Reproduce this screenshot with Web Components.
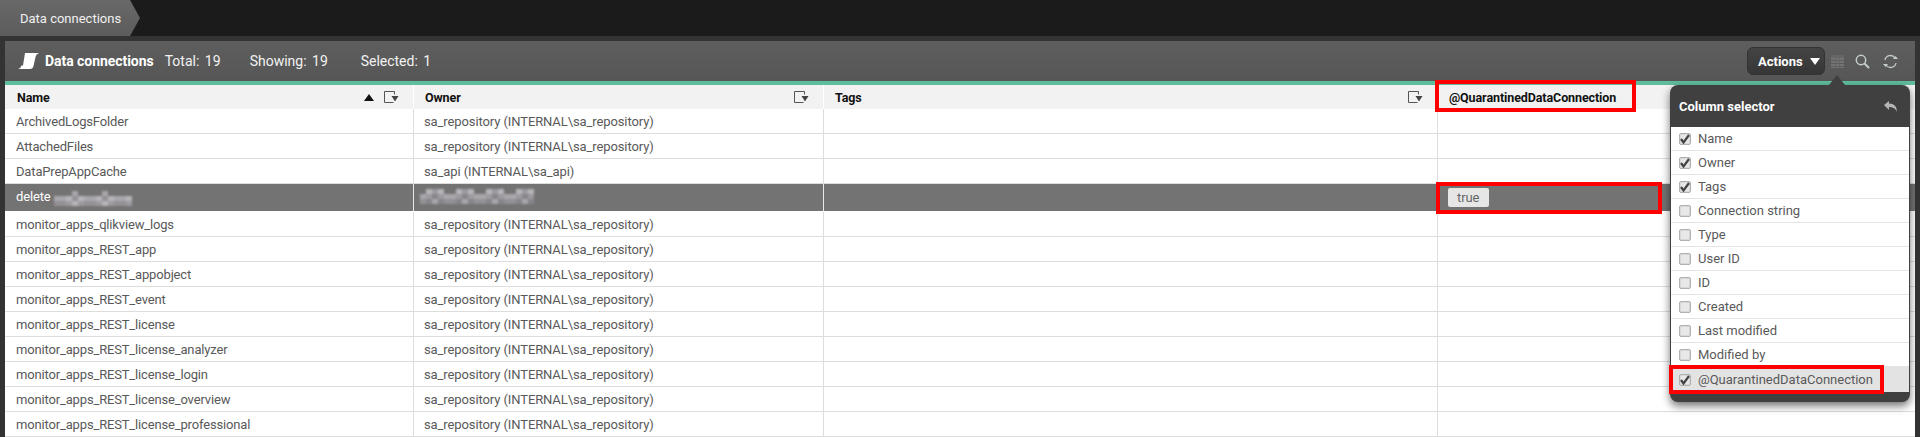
<!DOCTYPE html>
<html>
<head>
<meta charset="utf-8">
<title>Data connections</title>
<style>
  html, body { margin: 0; height: 437px; overflow: hidden; background: #333; }
  body { position: relative; font-family: Roboto, "Liberation Sans", sans-serif; }
</style>
</head>
<body>
<nav-bar>Data connections</nav-bar>
<conn-panel></conn-panel>
<column-selector></column-selector>
<red-box style="left:1435px;top:80px;width:201px;height:32px"></red-box>
<red-box style="left:1436px;top:182px;width:226px;height:32px"></red-box>
<red-box style="left:1669px;top:365px;width:215px;height:29px"></red-box>

<script>
const FILTER_ICON = `<svg width="15" height="12" viewBox="0 0 15 12"><path d="M10.500 3.500V.5H.5v11h9" fill="none" stroke="#555"/><path d="M7.500 5h7L11 10.500z" fill="#444"/></svg>`;

class NavBar extends HTMLElement {
  constructor() {
    super();
    this.attachShadow({ mode: "open" }).innerHTML = `
      <style>
        :host { display: block; height: 36px; background: #1b1b1b; }
        .crumb { display: flex; align-items: center; width: 140px; height: 36px; padding-left: 20px; box-sizing: border-box;
                 font-size: 13px; color: #f0f0f0; background: linear-gradient(#686868, #5c5c5c);
                 clip-path: polygon(0 0, 130px 0, 140px 18px, 130px 36px, 0 36px); }
      </style>
      <div class="crumb"><slot></slot></div>`;
  }
}
customElements.define("nav-bar", NavBar);

class PanelHeader extends HTMLElement {
  constructor() {
    super();
    this.attachShadow({ mode: "open" }).innerHTML = `
      <style>
        :host { display: flex; align-items: center; height: 44px; box-sizing: border-box; padding: 0 16px 0 13px;
                background: linear-gradient(#5e5e5e, #565656); border-bottom: 4px solid #5fbc9c; color: #f2f2f2; font-size: 14px; }
        .logo { display: block; margin-right: 6px; }
        b { color: #fff; font-weight: 700; margin-right: 11px; letter-spacing: -.05px; }
        .stat { word-spacing: 2px; }
        .btn { margin-left: auto; display: flex; align-items: center; width: 78px; height: 28px; box-sizing: border-box; padding-left: 10px;
               background: linear-gradient(#444, #363636); border: 1px solid #333; border-radius: 6px; color: #fff; font-weight: 700; font-size: 13px; }
        .btn i { margin-left: 7px; border: 5px solid transparent; border-top: 7px solid #fff; border-bottom: 0; }
        .tools { display: flex; align-items: center; }
        .tools svg { display: block; }
      </style>
      <svg class="logo" width="21" height="16" viewBox="0 0 21 16"><path d="M7 0h14q-3 1-3.500 4l-2 9q-.6 3-3.500 3H0q3-1 3.500-3.500h1.500z" fill="#fff"/></svg>
      <b>Data connections</b>
      <span class="stat" style="width:85px">Total: 19</span>
      <span class="stat" style="width:111px">Showing: 19</span>
      <span class="stat">Selected: 1</span>
      <div class="btn">Actions<i></i></div>
      <div class="tools">
        <svg style="margin-left:6px" width="13" height="13" viewBox="0 0 13 13"><path d="M0 0h13v13H0z" fill="#737373"/><path d="M0 0h13v3H0z" fill="#666"/><path d="M0 5.500h13M0 8.500h13M0 11.500h13" stroke="#5c5c5c"/><path d="M4.500 3v10M8.500 3v10" stroke="#666"/></svg>
        <svg style="margin-left:11px" width="15" height="15" viewBox="0 0 15 15"><circle cx="6" cy="6" r="4.700" fill="none" stroke="#c5cccc" stroke-width="1.500"/><path d="M9.500 9.500l4.500 4.500" stroke="#c5cccc" stroke-width="2"/></svg>
        <svg style="margin-left:12px" width="17" height="15" viewBox="0 0 17 15"><path d="M3 6a5.500 5.500 0 0 1 10-2M14 9a5.500 5.500 0 0 1-10 2" fill="none" stroke="#c5cccc" stroke-width="1.300"/><path d="M11 5h5l-2.500-3zM1 10h5l-2.500 3z" fill="#c5cccc"/></svg>
      </div>`;
  }
}
customElements.define("panel-header", PanelHeader);

// pixelated stand-in for the blurred-out text
class BlurBlock extends HTMLElement {
  connectedCallback() {
    const w = +this.getAttribute("w"), seed = +this.getAttribute("seed");
    let cells = "";
    for (let y = 0; y < 3; y++) for (let x = 0; x < w; x++) {
      const v = (x * 7 + y * 13 + seed * x * x) % 5;
      const g = [136, 148, 158, 170, 184][v];
      const a = y == 0 && v < 2 ? 0 : 1;
      cells += `<rect x="${x * 6}" y="${y * 5}" width="6" height="5" fill="rgb(${g},${g - 3},${g + 2})" opacity="${a}"/>`;
    }
    this.attachShadow({ mode: "open" }).innerHTML = `
      <style>:host { display: inline-block; vertical-align: middle; line-height: 0; } svg { display: block; }</style>
      <svg width="${w * 6}" height="15" style="filter:blur(1px)">${cells}</svg>`;
  }
}
customElements.define("blur-block", BlurBlock);

class TableRow extends HTMLElement {
  constructor() {
    super();
    this.attachShadow({ mode: "open" }).innerHTML = `
      <style>
        :host { display: grid; grid-template-columns: 408px 1px 409px 1px 613px 1px 477px; height: 25px; box-sizing: border-box;
                border-bottom: 1px solid #ddd; background: #fff; color: #595959; font-size: 13px; letter-spacing: -.16px; align-items: center; }
        :host([selected]) { height: 28px; background: #737373; color: #fff; border-bottom-color: #fff; }
        :host([head]) { height: 24px; border: 0; background: #f2f2f2; color: #111; font-weight: 700; font-size: 12.5px; letter-spacing: -.1px; }
        .c { display: flex; align-items: center; height: 100%; padding-left: 11px; box-sizing: border-box; white-space: nowrap; overflow: hidden; }
        .c + .d + .c { padding-left: 10px; letter-spacing: -.1px; }
        .d { height: 100%; background: #ddd; }
        :host([selected]) .d { background: #e8e8e8; }
        :host([head]) .d { background: #fff; }
        :host([head]) .c:first-child { background: #e5e5e5; }
      </style>
      <div class="c"><slot name="a"></slot></div><div class="d"></div>
      <div class="c"><slot name="b"></slot></div><div class="d"></div>
      <div class="c"><slot name="c"></slot></div><div class="d"></div>
      <div class="c"><slot name="d"></slot></div>`;
  }
}
customElements.define("table-row", TableRow);

class HeadCell extends HTMLElement {
  constructor() {
    super();
    const sorted = this.hasAttribute("sorted");
    this.attachShadow({ mode: "open" }).innerHTML = `
      <style>
        :host { display: flex; align-items: center; height: 24px; width: 100%; margin: 0 14px 0 1px; }
        .t { flex: 1; }
        i { border: 5px solid transparent; border-bottom: 7px solid #111; border-top: 0; margin-right: 10px; }
      </style>
      <span class="t"><slot></slot></span>${sorted ? "<i></i>" : ""}${FILTER_ICON}`;
  }
}
customElements.define("head-cell", HeadCell);

class TrueTag extends HTMLElement {
  constructor() {
    super();
    this.attachShadow({ mode: "open" }).innerHTML = `
      <style>
        :host { display: inline-block; padding: 0 10px 0 9px; height: 19px; line-height: 19px; background: #e6e6e6;
                border-radius: 2px; color: #666; font-size: 13px; }
      </style><slot></slot>`;
  }
}
customElements.define("true-tag", TrueTag);

class ConnPanel extends HTMLElement {
  constructor() {
    super();
    const names = ["monitor_apps_qlikview_logs", "monitor_apps_REST_app", "monitor_apps_REST_appobject", "monitor_apps_REST_event",
      "monitor_apps_REST_license", "monitor_apps_REST_license_analyzer", "monitor_apps_REST_license_login",
      "monitor_apps_REST_license_overview", "monitor_apps_REST_license_professional"];
    const repo = "sa_repository (INTERNAL\\sa_repository)";
    const row = (n, o) => `<table-row><span slot="a">${n}</span><span slot="b">${o}</span></table-row>`;
    this.attachShadow({ mode: "open" }).innerHTML = `
      <style>
        :host { display: block; margin: 5px 5px 0; }
      </style>
      <panel-header></panel-header>
      <table-row head>
        <head-cell slot="a" sorted>Name</head-cell>
        <head-cell slot="b">Owner</head-cell>
        <head-cell slot="c">Tags</head-cell>
        <span slot="d" style="padding-left:1px">@QuarantinedDataConnection</span>
      </table-row>
      ${row("ArchivedLogsFolder", repo)}
      ${row("AttachedFiles", repo)}
      ${row("DataPrepAppCache", "sa_api (INTERNAL\\sa_api)")}
      <table-row selected>
        <span slot="a">delete <blur-block w="13" seed="3"></blur-block></span>
        <span slot="b"><blur-block w="19" seed="2" style="margin:-4px 0 0 -4px"></blur-block></span>
        <true-tag slot="d">true</true-tag>
      </table-row>
      ${names.map(n => row(n, repo)).join("")}`;
  }
}
customElements.define("conn-panel", ConnPanel);

class SelectorItem extends HTMLElement {
  constructor() {
    super();
    const check = this.hasAttribute("checked")
      ? `<svg width="10" height="10" viewBox="0 0 10 10"><path d="M1 5l2.500 3.500L9 1" fill="none" stroke="#444" stroke-width="2.200"/></svg>` : "";
    this.attachShadow({ mode: "open" }).innerHTML = `
      <style>
        :host { display: flex; align-items: center; height: 24px; box-sizing: border-box; padding-left: 8px; background: #fff;
                border-bottom: 1px solid #e3e3e3; color: #595959; font-size: 13px; }
        :host([active]) { height: 25px; background: #e3e3e3; border: 0; }
        .box { display: flex; align-items: center; justify-content: center; box-sizing: border-box; width: 12px; height: 12px; margin-right: 7px;
               background: #e8e8e8; border: 1px solid #b0b0b0; border-radius: 2px; box-shadow: inset 0 0 0 1px #d8d8d8; }
      </style>
      <span class="box">${check}</span><slot></slot>`;
  }
}
customElements.define("selector-item", SelectorItem);

class ColumnSelector extends HTMLElement {
  constructor() {
    super();
    const off = ["Connection string", "Type", "User ID", "ID", "Created", "Last modified", "Modified by"];
    this.attachShadow({ mode: "open" }).innerHTML = `
      <style>
        :host { position: absolute; left: 1670px; top: 85px; width: 240px; height: 317px; box-sizing: border-box;
                background: #404040; border-radius: 8px; padding: 0 1px; box-shadow: 0 4px 9px rgba(0,0,0,.55); }
        .arrow { position: absolute; left: 159px; top: -10px; border: 8px solid transparent; border-bottom: 10px solid #404040; border-top: 0; }
        header { display: flex; align-items: center; justify-content: space-between; height: 42px; padding: 0 12px 0 8px;
                 color: #fff; font-size: 13px; font-weight: 700; }
      </style>
      <div class="arrow"></div>
      <header>Column selector
        <svg width="13" height="11" viewBox="0 0 13 11"><path d="M0 4l5-4v2.500q8 0 8 8.500q-2-5-8-5V9z" fill="#b5b5b5"/></svg>
      </header>
      <selector-item checked>Name</selector-item>
      <selector-item checked>Owner</selector-item>
      <selector-item checked>Tags</selector-item>
      ${off.map(t => `<selector-item>${t}</selector-item>`).join("")}
      <selector-item checked active>@QuarantinedDataConnection</selector-item>`;
  }
}
customElements.define("column-selector", ColumnSelector);

class RedBox extends HTMLElement {
  constructor() {
    super();
    this.attachShadow({ mode: "open" }).innerHTML = `
      <style>:host { position: absolute; box-sizing: border-box; border: 4px solid #f00; display: block; }</style>`;
  }
}
customElements.define("red-box", RedBox);
</script>
</body>
</html>
